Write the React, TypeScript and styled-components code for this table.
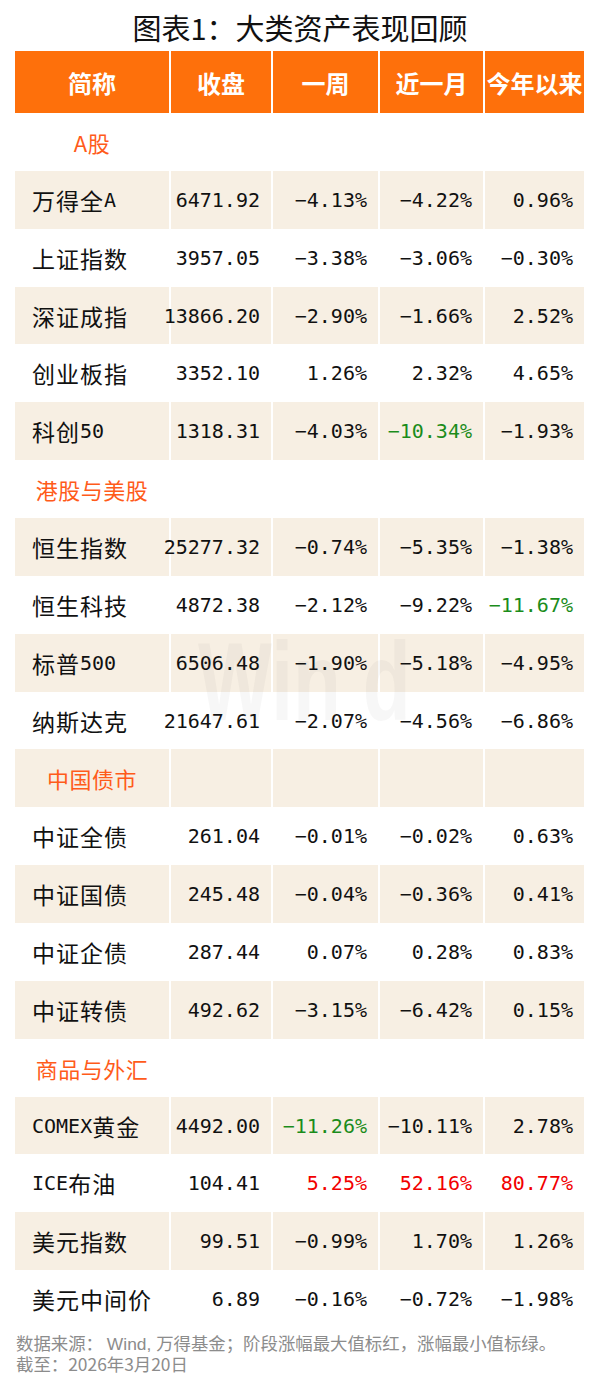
import React from "react";
import styled, { createGlobalStyle } from "styled-components";

const GlobalStyle = createGlobalStyle`
  html, body { margin: 0; padding: 0; background: #ffffff; }
  body { font-family: "Noto Sans CJK SC", "Noto Sans", sans-serif; }
`;

const COLS = "154px 100px 105px 103px 99px";
const ROW_H = 57.86;

const Page = styled.div`
  position: relative;
  width: 600px;
  height: 1387px;
  overflow: hidden;
  background: #fff;
  display: flex;
  flex-direction: column;
`;

const Title = styled.h1`
  margin: 0;
  height: 51px;
  display: flex;
  align-items: center;
  justify-content: center;
  font-family: "Noto Sans CJK SC", sans-serif;
  font-size: 29px;
  font-weight: 400;
  color: #111;
  padding-top: 2px;
  box-sizing: border-box;
`;

const Table = styled.div`
  margin-left: 15px;
  width: 569px;
  display: flex;
  flex-direction: column;
`;

const HeaderRow = styled.div`
  display: grid;
  grid-template-columns: ${COLS};
  column-gap: 2px;
  height: 62px;
`;

const HeaderCell = styled.div`
  background: #fe700b;
  color: #fff;
  font-family: "Noto Sans CJK SC", sans-serif;
  font-weight: 700;
  font-size: 24px;
  display: flex;
  align-items: center;
  justify-content: center;
  white-space: nowrap;
  overflow: hidden;
`;

const Row = styled.div`
  display: grid;
  grid-template-columns: ${COLS};
  column-gap: 2px;
  height: ${ROW_H}px;
`;

const Cell = styled.div<{ $shaded: boolean }>`
  background: ${(p) => (p.$shaded ? "#f7efe3" : "#ffffff")};
  display: flex;
  align-items: center;
  white-space: nowrap;
  min-width: 0;
`;

const NameCell = styled(Cell)`
  padding-left: 17px;
  font-family: "Noto Sans CJK SC", sans-serif;
  font-size: 23px;
  letter-spacing: 1px;
  color: #111;
`;

const SectionCell = styled(Cell)`
  justify-content: center;
  font-family: "Noto Sans CJK SC", sans-serif;
  font-size: 22px;
  color: #ff5b1a;
  letter-spacing: 0.5px;
`;

const Latin = styled.span`
  font-family: "DejaVu Sans Mono", monospace;
  font-size: 20px;
  letter-spacing: 0;
`;

const NumCell = styled(Cell)<{ $tone?: "red" | "green" | "plain" }>`
  justify-content: flex-end;
  padding-right: 11px;
  font-family: "DejaVu Sans Mono", "Noto Sans CJK SC", monospace;
  font-size: 20px;
  color: ${(p) =>
    p.$tone === "red" ? "#f20000" : p.$tone === "green" ? "#1b8c1b" : "#111"};
`;

const Footer = styled.div`
  margin-top: 5px;
  padding-left: 16px;
  font-family: "Noto Sans CJK SC", sans-serif;
  font-size: 17.4px;
  line-height: 19px;
  color: #8c8c8c;
`;

const FooterLatin = styled.span`
  font-family: "Liberation Sans", sans-serif;
`;

const Watermark = styled.div`
  position: absolute;
  left: 198px;
  top: 626px;
  font-family: "Liberation Sans", sans-serif;
  font-weight: 700;
  font-size: 112px;
  line-height: 1;
  color: rgba(70, 70, 70, 0.045);
  white-space: pre;
  transform: scaleX(0.7);
  transform-origin: left top;
  pointer-events: none;
`;

type Tone = "red" | "green" | "plain";
type DataRow = {
  kind: "data";
  name: React.ReactNode;
  close: string;
  w: string;
  m: string;
  y: string;
  tones?: [Tone, Tone, Tone];
};
type SectionRow = { kind: "section"; label: string };
type AnyRow = DataRow | SectionRow;

const m = (s: string) => s.replace(/-/g, "\u2212");

const rows: AnyRow[] = [
  { kind: "section", label: "A股" },
  { kind: "data", name: <>万得全<Latin>A</Latin></>, close: "6471.92", w: "-4.13%", m: "-4.22%", y: "0.96%" },
  { kind: "data", name: "上证指数", close: "3957.05", w: "-3.38%", m: "-3.06%", y: "-0.30%" },
  { kind: "data", name: "深证成指", close: "13866.20", w: "-2.90%", m: "-1.66%", y: "2.52%" },
  { kind: "data", name: "创业板指", close: "3352.10", w: "1.26%", m: "2.32%", y: "4.65%" },
  { kind: "data", name: <>科创<Latin>50</Latin></>, close: "1318.31", w: "-4.03%", m: "-10.34%", y: "-1.93%", tones: ["plain", "green", "plain"] },
  { kind: "section", label: "港股与美股" },
  { kind: "data", name: "恒生指数", close: "25277.32", w: "-0.74%", m: "-5.35%", y: "-1.38%" },
  { kind: "data", name: "恒生科技", close: "4872.38", w: "-2.12%", m: "-9.22%", y: "-11.67%", tones: ["plain", "plain", "green"] },
  { kind: "data", name: <>标普<Latin>500</Latin></>, close: "6506.48", w: "-1.90%", m: "-5.18%", y: "-4.95%" },
  { kind: "data", name: "纳斯达克", close: "21647.61", w: "-2.07%", m: "-4.56%", y: "-6.86%" },
  { kind: "section", label: "中国债市" },
  { kind: "data", name: "中证全债", close: "261.04", w: "-0.01%", m: "-0.02%", y: "0.63%" },
  { kind: "data", name: "中证国债", close: "245.48", w: "-0.04%", m: "-0.36%", y: "0.41%" },
  { kind: "data", name: "中证企债", close: "287.44", w: "0.07%", m: "0.28%", y: "0.83%" },
  { kind: "data", name: "中证转债", close: "492.62", w: "-3.15%", m: "-6.42%", y: "0.15%" },
  { kind: "section", label: "商品与外汇" },
  { kind: "data", name: <><Latin>COMEX</Latin>黄金</>, close: "4492.00", w: "-11.26%", m: "-10.11%", y: "2.78%", tones: ["green", "plain", "plain"] },
  { kind: "data", name: <><Latin>ICE</Latin>布油</>, close: "104.41", w: "5.25%", m: "52.16%", y: "80.77%", tones: ["red", "red", "red"] },
  { kind: "data", name: "美元指数", close: "99.51", w: "-0.99%", m: "1.70%", y: "1.26%" },
  { kind: "data", name: "美元中间价", close: "6.89", w: "-0.16%", m: "-0.72%", y: "-1.98%" },
];

const headers = ["简称", "收盘", "一周", "近一月", "今年以来"];

export default function App() {
  return (
    <>
      <GlobalStyle />
      <Page>
        <Title>图表1：大类资产表现回顾</Title>
        <Table>
          <HeaderRow>
            {headers.map((h) => (
              <HeaderCell key={h}>{h}</HeaderCell>
            ))}
          </HeaderRow>
          {rows.map((r, i) => {
            const shaded = i % 2 === 1;
            if (r.kind === "section") {
              return (
                <Row key={i}>
                  <SectionCell $shaded={shaded}>{r.label}</SectionCell>
                  <Cell $shaded={shaded} />
                  <Cell $shaded={shaded} />
                  <Cell $shaded={shaded} />
                  <Cell $shaded={shaded} />
                </Row>
              );
            }
            const t = r.tones ?? ["plain", "plain", "plain"];
            return (
              <Row key={i}>
                <NameCell $shaded={shaded}>{r.name}</NameCell>
                <NumCell $shaded={shaded}>{r.close}</NumCell>
                <NumCell $shaded={shaded} $tone={t[0]}>{m(r.w)}</NumCell>
                <NumCell $shaded={shaded} $tone={t[1]}>{m(r.m)}</NumCell>
                <NumCell $shaded={shaded} $tone={t[2]}>{m(r.y)}</NumCell>
              </Row>
            );
          })}
        </Table>
        <Footer>
          数据来源： <FooterLatin>Wind, </FooterLatin>万得基金；阶段涨幅最大值标红，涨幅最小值标绿。
          <br />
          截至：2026年3月20日
        </Footer>
        <Watermark>{"Win d"}</Watermark>
      </Page>
    </>
  );
}
